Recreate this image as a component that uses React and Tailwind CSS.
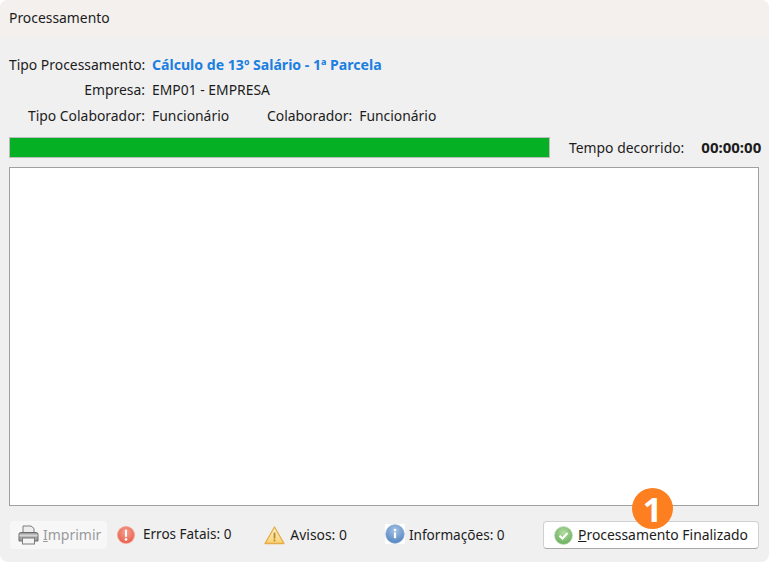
const font = { fontFamily: '"Noto Sans", sans-serif' };

const ErrorIcon = () => (
  <svg width="18" height="18" viewBox="0 0 18 18">
    <defs>
      <radialGradient id="err" cx="50%" cy="35%" r="70%">
        <stop offset="0%" stopColor="#f8a294" />
        <stop offset="100%" stopColor="#e65a45" />
      </radialGradient>
    </defs>
    <circle cx="9" cy="9" r="9" fill="#f3a494" />
    <circle cx="9" cy="9" r="8" fill="url(#err)" />
    <rect x="8" y="3.5" width="2" height="7.5" rx="0.8" fill="#fff" />
    <circle cx="9" cy="13.4" r="1.3" fill="#fff" />
  </svg>
);

const WarnIcon = () => (
  <svg width="21" height="19" viewBox="0 0 21 19">
    <defs>
      <linearGradient id="warn" x1="0" y1="0" x2="0" y2="1">
        <stop offset="0%" stopColor="#fff6d2" />
        <stop offset="100%" stopColor="#f7d06a" />
      </linearGradient>
    </defs>
    <path d="M10.5 1 L20 17.5 H1 Z" fill="url(#warn)" stroke="#e5ab4d" strokeWidth="1.3" strokeLinejoin="round" />
    <rect x="9.6" y="6.5" width="1.8" height="6" fill="#b58a35" />
    <rect x="9.6" y="13.5" width="1.8" height="1.8" fill="#b58a35" />
  </svg>
);

const InfoIcon = () => (
  <svg width="20" height="20" viewBox="0 0 20 20" className="bg-white">
    <defs>
      <radialGradient id="info" cx="50%" cy="30%" r="75%">
        <stop offset="0%" stopColor="#a5c3e6" />
        <stop offset="100%" stopColor="#4f80bd" />
      </radialGradient>
    </defs>
    <circle cx="10" cy="10" r="9.2" fill="url(#info)" stroke="#7fa3cf" strokeWidth="0.8" />
    <circle cx="10" cy="6" r="1.3" fill="#fff" />
    <rect x="8.9" y="8.2" width="2.2" height="6" rx="0.6" fill="#fff" />
  </svg>
);

const CheckIcon = () => (
  <svg width="19" height="19" viewBox="0 0 19 19">
    <defs>
      <radialGradient id="ok" cx="50%" cy="35%" r="70%">
        <stop offset="0%" stopColor="#b5dca0" />
        <stop offset="100%" stopColor="#62ad58" />
      </radialGradient>
    </defs>
    <circle cx="9.5" cy="9.5" r="8.8" fill="url(#ok)" stroke="#a5cda0" strokeWidth="0.8" />
    <path d="M5.5 9.7 L8.5 12.5 L13.5 7" fill="none" stroke="#fff" strokeWidth="2" />
  </svg>
);

const PrinterIcon = () => (
  <svg width="21" height="20" viewBox="0 0 21 20">
    <path d="M5 8 V1 H13 L16 3.5 V8 Z" fill="#eeeeee" stroke="#7d7d7d" />
    <path d="M2.5 7.5 H18.5 Q20 7.5 20 9.5 V16 H1 V9.5 Q1 7.5 2.5 7.5 Z" fill="#a2a2a2" stroke="#6b6b6b" />
    <rect x="1.5" y="9.5" width="18" height="2" fill="#d6d6d6" />
    <rect x="4.5" y="13" width="12" height="6" fill="#f4f4f4" stroke="#7d7d7d" />
  </svg>
);

const App = () => {
  return (
    <div style={font} className="w-[769px] h-[562px] flex flex-col bg-[#f0f0f0] text-[13.9px] leading-none text-[#1c1c1c] overflow-hidden rounded-[8px]">
      <div className="h-[38px] shrink-0 bg-[#f3f0ed] flex items-center pl-[9px] pb-[2px]">Processamento</div>

      <div className="flex-1 flex flex-col pl-[9px] pr-[8px]">
        <div className="mt-[16px] flex h-[22px] items-center">
          <span className="w-[136px] text-right whitespace-nowrap">Tipo Processamento:</span>
          <span className="ml-[7px] font-bold text-[14.1px] text-[#1a7fe0]">Cálculo de 13º Salário - 1ª Parcela</span>
        </div>
        <div className="mt-[3px] flex h-[22px] items-center">
          <span className="w-[136px] text-right">Empresa:</span>
          <span className="ml-[7px]">EMP01 - EMPRESA</span>
        </div>
        <div className="mt-[4px] flex h-[22px] items-center">
          <span className="w-[136px] text-right">Tipo Colaborador:</span>
          <span className="ml-[7px] w-[115px]">Funcionário</span>
          <span>Colaborador:</span>
          <span className="ml-[7px]">Funcionário</span>
        </div>

        <div className="mt-[10px] flex items-center h-[21px]">
          <div className="w-[541px] h-[21px] shrink-0 bg-[#06b025] border border-[#bcbcbc]" />
          <span className="ml-[19px] whitespace-nowrap">Tempo decorrido:</span>
          <span className="ml-[17px] font-bold text-[15px] whitespace-nowrap">00:00:00</span>
        </div>

        <div className="mt-[9px] h-[339px] w-[750px] bg-white border border-[#a0a0a0]" />

        <div className="mt-[14px] flex items-center h-[30px]">
          <button className="ml-[1px] w-[97px] h-[28px] rounded-[4px] bg-[#f7f7f7] flex items-center pl-[8px] gap-[4px] text-[14px] text-[#9a9a9a]">
            <PrinterIcon />
            <span><span className="underline">I</span>mprimir</span>
          </button>
          <span className="ml-[10px]"><ErrorIcon /></span>
          <span className="ml-[8px] text-[13.5px] whitespace-nowrap">Erros Fatais: 0</span>
          <span className="ml-[33px] flex"><WarnIcon /></span>
          <span className="ml-[5px] whitespace-nowrap">Avisos: 0</span>
          <span className="ml-[38px] flex -mt-[2px]"><InfoIcon /></span>
          <span className="ml-[4px] text-[13.6px] whitespace-nowrap">Informações: 0</span>
          <div className="relative ml-auto mr-[2px]">
            <span className="absolute left-[89px] top-[-33px] w-[41px] h-[41px] rounded-full bg-[#fd7f20] text-white flex items-center justify-center text-[34px] font-bold z-10" style={{ fontFamily: '"Open Sans", sans-serif' }}>1</span>
            <button className="w-[216px] h-[28px] rounded-[4px] bg-white border border-[#d0d0d0] border-b-[#a8a8a8] flex items-center justify-center gap-[5px]">
              <CheckIcon />
              <span className="whitespace-nowrap"><span className="underline">P</span>rocessamento Finalizado</span>
            </button>
          </div>
        </div>
      </div>
    </div>
  );
};

export default App;
